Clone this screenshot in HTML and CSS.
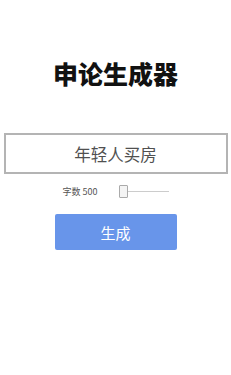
FILE: index.html
```html
<!DOCTYPE html>
<html lang="zh">
<head>
    <meta charset="UTF-8">
    <meta name="viewport" content="width=device-width, initial-scale=1.0">
    <title>申论生成器</title>
    <link rel="stylesheet" href="styles.css">
</head>
<body>
    <main class="page">
        <h1 class="title">申论生成器</h1>
        <input type="text" class="topic" value="年轻人买房">
        <div class="count-row">
            <label for="count" class="count-label">字数 <span id="count-value">500</span></label>
            <input type="range" id="count" class="count-slider" min="500" max="5000" step="100" value="500">
        </div>
        <button class="generate">生成</button>
    </main>
    <script>
        document.getElementById('count').oninput = function() {
            document.getElementById('count-value').textContent = this.value;
        };
    </script>
</body>
</html>
```

FILE: styles.css
```css
body {
    margin: 0;
    padding: 0;
    background: #fff;
    font-family: "Noto Sans CJK SC", "Noto Sans", sans-serif;
    color: #333;
}

.page {
    display: flex;
    flex-direction: column;
    align-items: center;
}

.title {
    margin: 58px 0 0;
    font-size: 25px;
    line-height: 30px;
    font-weight: 900;
    color: #111;
}

.topic {
    box-sizing: border-box;
    width: 224px;
    height: 41px;
    margin: 45px 0 0;
    padding: 0;
    border: 2px solid #b4b4b4;
    outline: none;
    text-align: center;
    font-family: inherit;
    font-size: 16.5px;
    color: #505050;
}

.count-row {
    display: flex;
    align-items: center;
    gap: 21px;
    height: 14px;
    margin-top: 10px;
}

.count-label {
    font-size: 9px;
    color: #555;
}

.count-slider {
    -webkit-appearance: none;
    appearance: none;
    width: 50px;
    height: 13px;
    margin: 0;
    background: linear-gradient(#ccc, #ccc) center / 100% 1px no-repeat;
}

.count-slider::-webkit-slider-thumb {
    -webkit-appearance: none;
    width: 9px;
    height: 13px;
    border: 1px solid #aaa;
    border-radius: 1px;
    background: #f4f4f4;
    box-sizing: border-box;
}

.generate {
    width: 122px;
    height: 36px;
    margin-top: 16px;
    border: none;
    border-radius: 2px;
    background: #6895ea;
    color: #fff;
    font-family: inherit;
    font-size: 15px;
    cursor: pointer;
}
```
